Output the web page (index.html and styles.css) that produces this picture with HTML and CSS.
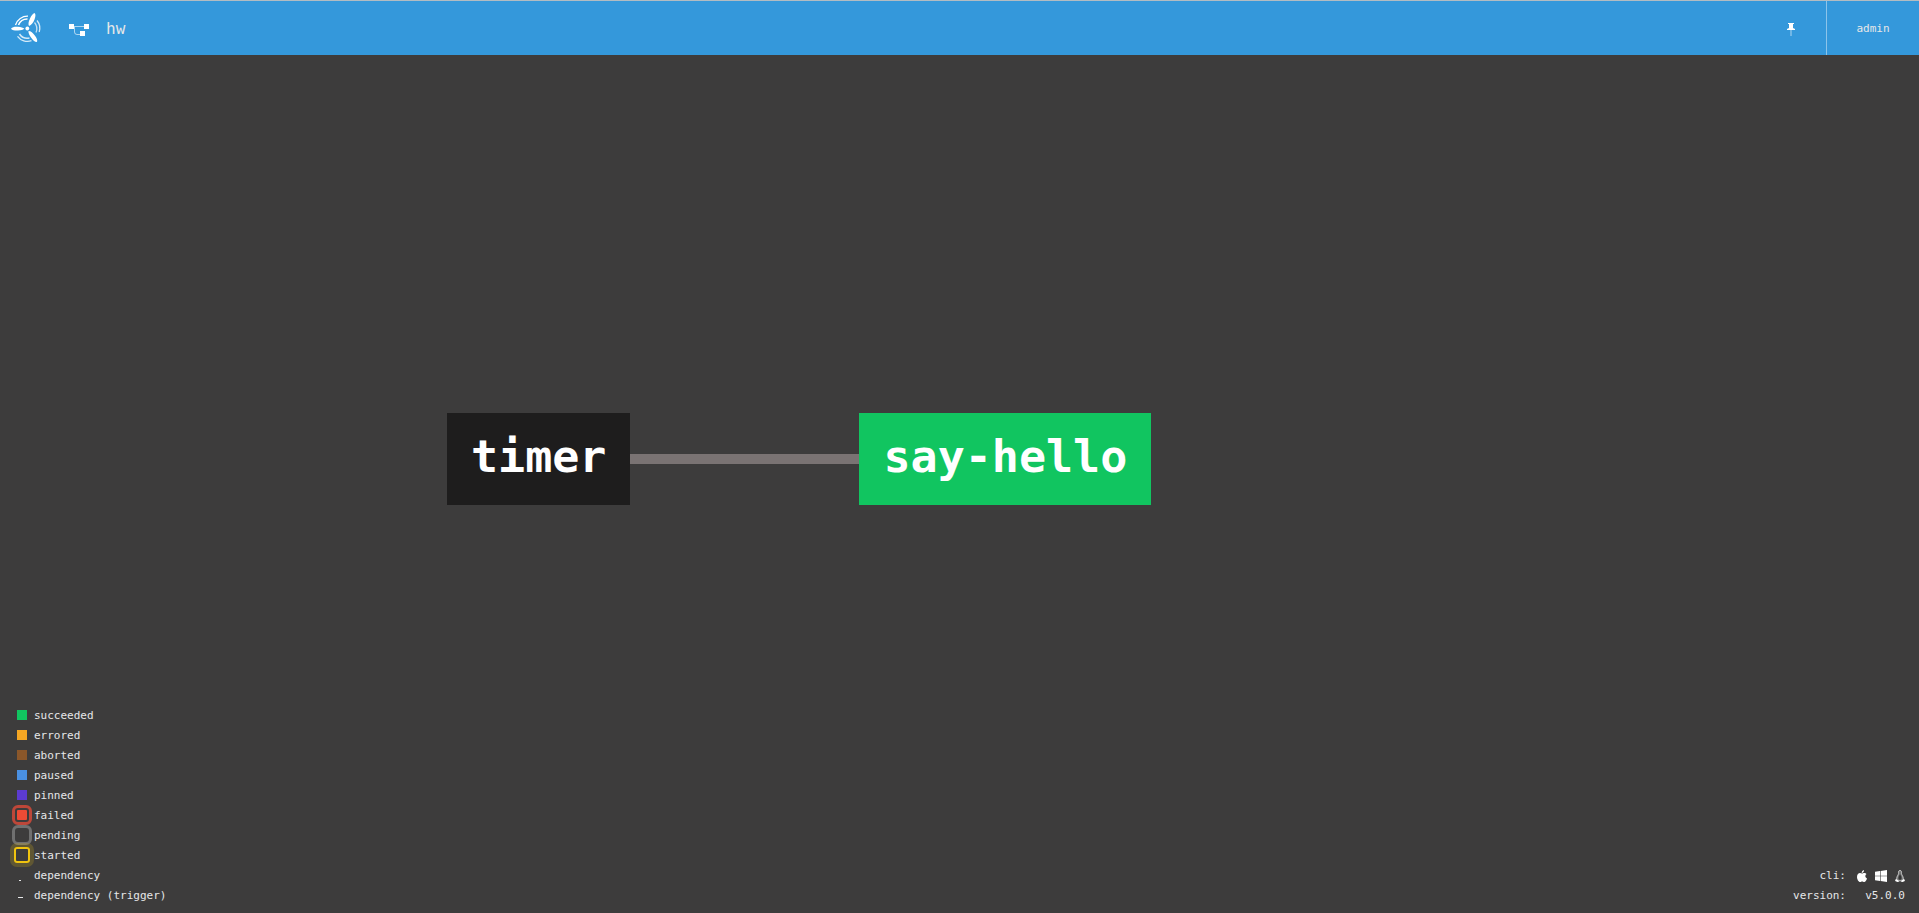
FILE: index.html
```html
<!DOCTYPE html>
<html lang="en">
<head>
<meta charset="utf-8">
<title>hw - Concourse</title>
<link rel="stylesheet" href="styles.css">
</head>
<body>
<header class="topbar">
  <a class="logo" href="#" aria-label="Home">
    <svg width="32" height="32" viewBox="0 0 32 32" fill="#fff">
      <circle cx="17.300" cy="16.500" r="1.900"/>
      <path d="M1 16.700C2.500 14.600 5 14.500 8 14.700C11 15 13 15.500 14.300 16.500C13 18 11 18.300 8 18.500C5 18.600 2.500 18.400 1 16.700Z"/>
      <path d="M24.500 1C26 2 25.500 5 24.500 7.500C23.300 10.500 21.500 13 19 14C18 12 18.500 9.500 20 6.500C21.300 3.700 22.700 1.500 24.500 1Z"/>
      <path d="M27 30C24.500 30 22.800 28 21 25.500C19.300 23 18.200 21 18.500 19C20.800 19 23 21 24.800 23.500C26.700 26 27.700 28.300 27 30Z"/>
      <g fill="none" stroke="#fff">
        <path d="M5.500 13A12.500 12.500 0 0 1 18 4.200" stroke-width="1.300"/>
        <path d="M8.500 13A9.500 9.500 0 0 1 17.500 7" stroke-width="1.600"/>
        <path d="M27 8.500A12.500 12.500 0 0 1 29.200 20" stroke-width="1.300" opacity=".8"/>
        <path d="M24.500 10.500A9.500 9.500 0 0 1 26 20.500" stroke-width="1.300" opacity=".7"/>
        <path d="M21.500 28.700A12.500 12.500 0 0 1 7.500 24.300" stroke-width="1.300" opacity=".8"/>
        <path d="M19.500 26A9.500 9.500 0 0 1 9.500 22" stroke-width="1.500" opacity=".8"/>
      </g>
    </svg>
  </a>
  <a class="crumb" href="#">
    <svg width="22" height="14" viewBox="0 0 22 14" fill="#fff">
      <path d="M5 2.500H17M5.500 3V8Q5.500 10.500 8 10.500H12" fill="none" stroke="#fff" stroke-opacity=".6"/>
      <path d="M0 0H5V5H0ZM15 0H20V5H15ZM11 7H16V12H11Z"/>
    </svg>
    <span>hw</span>
  </a>
  <button class="pin" type="button" aria-label="Pinned resources">
    <svg width="8" height="13" viewBox="0 0 8 13" fill="#fff">
      <path d="M1 0H7V1H6V5L8 6V7H0V6L2 5V1H1Z"/><path d="M3 7H5V13H3Z" opacity=".3"/>
    </svg>
  </button>
  <button class="user" type="button">admin</button>
</header>
<main class="pipeline">
  <div class="graph">
    <a class="node resource" href="#">timer</a>
    <span class="edge"></span>
    <a class="node succeeded" href="#">say-hello</a>
  </div>
  <div class="footer">
    <dl class="legend">
      <dt class="swatch green"></dt><dd>succeeded</dd>
      <dt class="swatch orange"></dt><dd>errored</dd>
      <dt class="swatch brown"></dt><dd>aborted</dd>
      <dt class="swatch blue"></dt><dd>paused</dd>
      <dt class="swatch purple"></dt><dd>pinned</dd>
      <dt class="swatch failed"></dt><dd>failed</dd>
      <dt class="swatch pending"></dt><dd>pending</dd>
      <dt class="swatch started"></dt><dd>started</dd>
      <dt class="swatch dot"></dt><dd>dependency</dd>
      <dt class="swatch dash"></dt><dd>dependency (trigger)</dd>
    </dl>
    <dl class="info">
      <dt>cli:</dt>
      <dd class="downloads">
        <a href="#" aria-label="Download for macOS"><svg width="10" height="12" viewBox="0 0 10 12" fill="#fff"><path d="M7 0C7.200 1.600 6 3 4.700 3C4.600 1.500 5.600.300 7 0ZM5 3.600C5.700 3.600 6.300 3 7.300 3C8.300 3 9 3.500 9.500 4.100C7.700 5.300 8 7.800 10 8.500C9.500 10 8.500 12 7.200 12C6.300 12 6.100 11.500 5.200 11.500C4.200 11.500 4 12 3.200 12C1.500 12 0 9.100 0 6.900C0 4.500 1.500 3.100 3 3.100C3.900 3.100 4.500 3.600 5 3.600Z"/></svg></a>
        <a href="#" aria-label="Download for Windows"><svg width="12" height="12" viewBox="0 0 12 12" fill="#fff"><path d="M0 1.700L5 1V5.700H0ZM5.600.900L12 0V5.700H5.600ZM0 6.300H5V11L0 10.300ZM5.600 6.300H12V12L5.600 11.100Z"/></svg></a>
        <a href="#" aria-label="Download for Linux"><svg width="10" height="12" viewBox="0 0 10 12"><path d="M5 .500C3.300.500 3.400 2 3.500 3.500C3.500 4.800 1.800 6 1.700 8.500L.500 10.300L3 11.500L4 10.800H6L7 11.500L9.500 10.300L8.300 8.500C8.200 6 6.500 4.800 6.500 3.500C6.600 2 6.700.500 5 .500Z" fill="#777" stroke="#ddd" stroke-width=".8"/><path d="M5 4Q3 7 3.500 9L5 10L6.500 9Q7 7 5 4Z" fill="#333"/><path d="M1.500 9L4 11L3 12L0 11ZM8.500 9L6 11L7 12L10 11Z" fill="#fff"/></svg></a>
      </dd>
      <dt>version:</dt>
      <dd>v5.0.0</dd>
    </dl>
  </div>
</main>
</body>
</html>
```
FILE: styles.css
```css
* {
  box-sizing: border-box;
}

body {
  margin: 0;
  min-height: 100vh;
  display: flex;
  flex-direction: column;
  background: #3d3c3c;
  color: #e6e7e8;
  font: 11px/20px "DejaVu Sans Mono", "Liberation Mono", monospace;
}

a {
  color: inherit;
  text-decoration: none;
}

button {
  border: 0;
  padding: 0;
  background: none;
  color: inherit;
  font: inherit;
}

.topbar {
  display: flex;
  align-items: stretch;
  height: 55px;
  border-top: 1px solid #b3bcc2;
  background: #3498db;
}

.logo {
  display: flex;
  align-items: center;
  padding: 0 10px;
}

.crumb {
  display: flex;
  align-items: center;
  gap: 15px;
  padding: 2px 0 0 17px;
  font-size: 16px;
}

.crumb svg {
  margin-top: 4px;
}

.pin {
  width: 70px;
  margin-left: auto;
  padding-top: 10px;
}

.user {
  width: 93px;
  padding-top: 2px;
  border-left: 1px solid #8dc4ea;
}

.pipeline {
  flex: 1;
  display: flex;
  flex-direction: column;
}

.graph {
  flex: 1;
  display: flex;
  align-items: flex-end;
  padding-left: 447px;
}

.node {
  padding: 16px 24px 20px;
  color: #fff;
  font-size: 45px;
  font-weight: bold;
  line-height: 56px;
}

.resource {
  background: #1e1d1d;
}

.succeeded {
  background: #11c560;
}

.edge {
  width: 229px;
  height: 10px;
  margin-bottom: 41px;
  background: #7a7373;
}

.footer {
  display: flex;
  justify-content: space-between;
  align-items: flex-end;
  padding: 200px 14px 8px 17px;
}

.legend {
  display: grid;
  grid-template-columns: 10px auto;
  grid-auto-rows: 20px;
  column-gap: 7px;
  align-items: center;
  margin: 0;
}

.legend dd,
.info dd {
  margin: 0;
}

.legend dd,
.info {
  padding-top: 2px;
}

.swatch {
  width: 10px;
  height: 10px;
}

.green {
  background: #11c560;
}

.orange {
  background: #f5a623;
}

.brown {
  background: #8b572a;
}

.blue {
  background: #4a90e2;
}

.purple {
  background: #5c3bd1;
}

.failed {
  background: #ed4b35;
  border-radius: 1px;
  outline: 3px solid #bd4739;
  outline-offset: 2px;
}

.pending {
  border-radius: 1px;
  outline: 3px solid #707070;
  outline-offset: 2px;
}

.started {
  width: 16px;
  height: 16px;
  margin: 0 -3px;
  border: 2px solid #f1c40f;
  border-radius: 3px;
  box-shadow: 0 0 0 4px rgba(241, 196, 15, 0.2);
}

.dot::before,
.dash::before {
  content: "";
  display: block;
  width: 2px;
  height: 1px;
  margin: 10px 0 0 2px;
  background: #e6e7e8;
}

.dash::before {
  width: 5px;
  margin: 7px 0 0 1px;
}

.info {
  display: grid;
  grid-template-columns: auto auto;
  grid-auto-rows: 20px;
  column-gap: 20px;
  margin: 0;
  text-align: right;
}

.downloads {
  display: flex;
  justify-content: flex-end;
  align-items: center;
  gap: 8px;
  margin-top: -2px;
}

.info {
  column-gap: 11px;
  margin-bottom: -1px;
}

.downloads svg {
  display: block;
}
```
